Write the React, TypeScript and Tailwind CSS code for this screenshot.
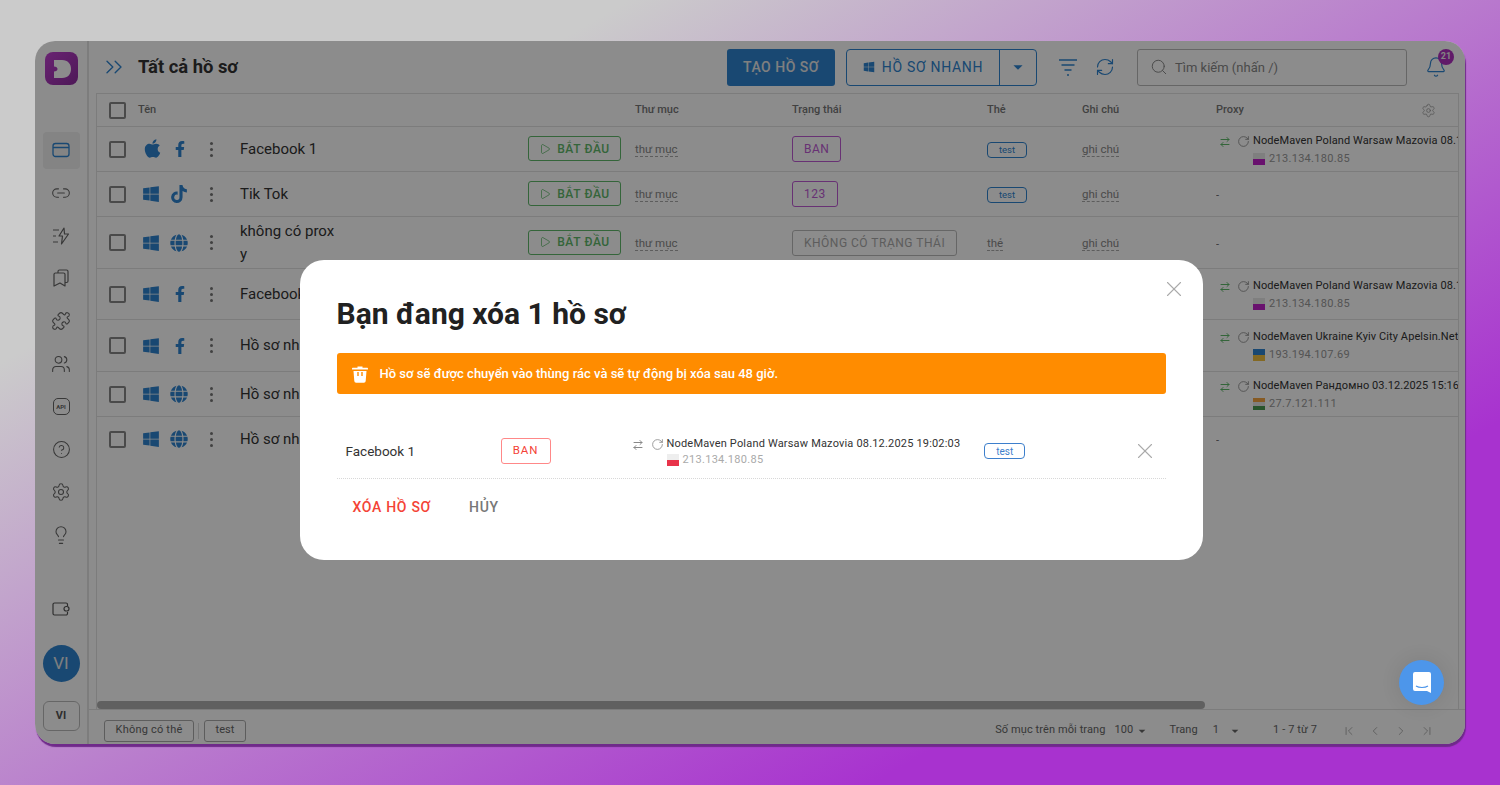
import { ReactNode } from 'react';
import {
  ArrowRightLeft, Bell, ChevronFirst, ChevronLast, ChevronLeft, ChevronRight, ChevronsRight,
  CircleHelp, Lightbulb, Link2, Play, Puzzle, RefreshCw, RotateCw, Search, Settings, Users, X,
} from 'lucide-react';
import { FaApple, FaFacebookF, FaGlobe, FaTiktok, FaWindows } from 'react-icons/fa';
import { MdArrowDropDown } from 'react-icons/md';

const WindowIcon = () => (
  <svg width="20" height="20" viewBox="0 0 20 20" fill="none" stroke="currentColor" strokeWidth="1.3">
    <rect x="2" y="3.5" width="16" height="13" rx="2.5" />
    <path d="M2 7.5h16" />
  </svg>
);

const BoltIcon = () => (
  <svg width="20" height="20" viewBox="0 0 20 20" fill="none" stroke="currentColor" strokeWidth="1.2" strokeLinejoin="round">
    <path d="M13 2l-5 8h3.500l-1 8 7-10h-4z" />
    <path d="M2 4h6M2 10h3M2 16h5" />
  </svg>
);

const CardsIcon = () => (
  <svg width="20" height="20" viewBox="0 0 20 20" fill="none" stroke="currentColor" strokeWidth="1.2" strokeLinejoin="round">
    <path d="M7 5V3.500A1.500 1.500 0 0 1 8.500 2h7A1.500 1.500 0 0 1 17 3.500V13a1.500 1.500 0 0 1-1.500 1.500H14" />
    <path d="M4.500 5h8A1.500 1.500 0 0 1 14 6.500V18l-5-3-6 3V6.500A1.500 1.500 0 0 1 4.500 5z" />
  </svg>
);

const WalletIcon = () => (
  <svg width="18" height="18" viewBox="0 0 18 18" fill="none" stroke="currentColor" strokeWidth="1.2">
    <path d="M15.500 6V4.500a1.500 1.500 0 0 0-1.500-1.500H2.500A1.500 1.500 0 0 0 1 4.500v9A1.500 1.500 0 0 0 2.500 15H14a1.500 1.500 0 0 0 1.500-1.500V12" />
    <rect x="12" y="6.500" width="5" height="4.500" rx="2.200" />
  </svg>
);

const FilterIcon = () => (
  <svg width="20" height="20" viewBox="0 0 20 20" fill="none" stroke="currentColor" strokeWidth="1.5">
    <path d="M1 3h18M3.500 8h13M6.500 13h7M9 18h2" />
  </svg>
);

const LogoIcon = () => (
  <svg width="22" height="22" viewBox="0 0 22 22" fill="#fff">
    <path d="M3 2h8c6 0 9 4 9 9s-3 9-9 9H3v-6.500c2.200 0 3.500-1 3.500-2.500S5.200 8.500 3 8.500z" />
  </svg>
);

const TrashIcon = () => (
  <svg width="16" height="18" viewBox="0 0 16 18">
    <path d="M5.500 1.500h5v1.300h4.500c.6 0 1 .4 1 1v.7H0v-.7c0-.6.4-1 1-1h4.500z" fill="#fff" />
    <path d="M1.500 6h13l-.8 10a1.800 1.800 0 0 1-1.800 1.700H4.100a1.800 1.800 0 0 1-1.800-1.700z" fill="#fff" />
    <path d="M6 7v4M10 7v4" stroke="#ff8c00" strokeWidth="1.400" />
  </svg>
);

const navIcons: ReactNode[] = [
  <WindowIcon />,
  <Link2 size={20} strokeWidth={1.3} />,
  <BoltIcon />,
  <CardsIcon />,
  <Puzzle size={20} strokeWidth={1.3} />,
  <Users size={20} strokeWidth={1.3} />,
  <div className="flex h-[17px] w-[17px] items-center justify-center rounded-[5px] border border-[#666] text-[6px] font-bold">API</div>,
  <CircleHelp size={19} strokeWidth={1.3} />,
  <Settings size={20} strokeWidth={1.3} />,
  <Lightbulb size={20} strokeWidth={1.3} />,
];

type Proxy = { name: string; ip: string; top: string; mid?: string; bottom: string };

type RowData = {
  os: 'apple' | 'win';
  browser: 'fb' | 'tiktok' | 'globe';
  name: string;
  status: string;
  statusClass: string;
  tag: boolean;
  proxy?: Proxy;
  h: string;
};

const poland = { top: 'bg-[#e8e8e8]', bottom: 'bg-[#c020c8]' };
const purple = 'border-[#bd5ad4] text-[#bd5ad4]';

const rows: RowData[] = [
  { os: 'apple', browser: 'fb', name: 'Facebook 1', status: 'BAN', statusClass: purple, tag: true, h: 'h-[45px]',
    proxy: { name: 'NodeMaven Poland Warsaw Mazovia 08.12.2025 19:02:03', ip: '213.134.180.85', ...poland } },
  { os: 'win', browser: 'tiktok', name: 'Tik Tok', status: '123', statusClass: purple, tag: true, h: 'h-[45px]' },
  { os: 'win', browser: 'globe', name: 'không có proxy', status: 'KHÔNG CÓ TRẠNG THÁI', statusClass: 'border-[#bbb] text-[#aaa]', tag: false, h: 'h-[52px]' },
  { os: 'win', browser: 'fb', name: 'Facebook 2', status: '', statusClass: '', tag: false, h: 'h-[51px]',
    proxy: { name: 'NodeMaven Poland Warsaw Mazovia 08.12.2025 19:02:03', ip: '213.134.180.85', ...poland } },
  { os: 'win', browser: 'fb', name: 'Hồ sơ nhanh', status: '', statusClass: '', tag: false, h: 'h-[52px]',
    proxy: { name: 'NodeMaven Ukraine Kyiv City Apelsin.Net', ip: '193.194.107.69', top: 'bg-[#2e84d0]', bottom: 'bg-[#f0c040]' } },
  { os: 'win', browser: 'globe', name: 'Hồ sơ nhanh', status: '', statusClass: '', tag: false, h: 'h-[45px]',
    proxy: { name: 'NodeMaven Рандомно 03.12.2025 15:16', ip: '27.7.121.111', top: 'bg-[#f5a540]', mid: 'bg-[#e8e8e8]', bottom: 'bg-[#4a9a50]' } },
  { os: 'win', browser: 'globe', name: 'Hồ sơ nhanh', status: '', statusClass: '', tag: false, h: 'h-[44px]' },
];

function Flag({ top, mid, bottom }: { top: string; mid?: string; bottom: string }) {
  return (
    <div className="flex h-[12px] w-[12px] shrink-0 flex-col">
      <div className={`flex-1 ${top}`} />
      {mid && <div className={`flex-1 ${mid}`} />}
      <div className={`flex-1 ${bottom}`} />
    </div>
  );
}

function ProfileRow({ row, last }: { row: RowData; last: boolean }) {
  return (
    <div className={`flex items-center pl-3 ${row.h} ${last ? '' : 'border-b border-[#e2e2e2]'}`}>
      <div className="w-[33px]">
        <div className="h-[17px] w-[17px] rounded-[2px] border-2 border-[#888]" />
      </div>
      <div className="w-[28px] text-[#2e84d0]">
        {row.os === 'apple' ? <FaApple size={21} className="-mt-[2px]" /> : <FaWindows size={18} />}
      </div>
      <div className="w-[30px] text-[#2e84d0]">
        {row.browser === 'fb' && <FaFacebookF size={16} className="ml-[2px]" />}
        {row.browser === 'tiktok' && <FaTiktok size={18} />}
        {row.browser === 'globe' && <FaGlobe size={18} />}
      </div>
      <div className="flex w-[22px] flex-col items-center gap-[3px]">
        <span className="h-[3px] w-[3px] rounded-full bg-[#777]" />
        <span className="h-[3px] w-[3px] rounded-full bg-[#777]" />
        <span className="h-[3px] w-[3px] rounded-full bg-[#777]" />
      </div>
      <div className="ml-[18px] w-[288px]">
        <div className="w-[100px] text-[15px] leading-[23px] break-all text-[#333]">{row.name}</div>
      </div>
      <div className="w-[107px]">
        <div className="mb-[1px] flex h-[25px] w-[93px] items-center justify-center gap-[6px] rounded-[3px] border border-[#5fb86a] text-[12px] font-medium tracking-[0.6px] text-[#5fb86a]">
          <Play size={12} strokeWidth={1.5} />
          BẮT ĐẦU
        </div>
      </div>
      <div className="-mt-[2px] w-[157px]">
        <span className="border-b border-dashed border-[#aaa] text-[11.5px] text-[#888]">thư mục</span>
      </div>
      <div className="w-[195px]">
        {row.status && (
          <span className={`inline-flex h-[26px] items-center rounded-[3px] border px-[11px] text-[12px] tracking-[0.5px] ${row.statusClass}`}>
            {row.status}
          </span>
        )}
      </div>
      <div className="-mt-[2px] w-[95px]">
        {row.tag ? (
          <span className="inline-flex h-[16px] w-[40px] items-center justify-center rounded-[4px] border border-[#2e84d0] text-[9.5px] text-[#2e84d0]">test</span>
        ) : row.status ? (
          <span className="border-b border-dashed border-[#aaa] text-[11.5px] text-[#888]">thẻ</span>
        ) : null}
      </div>
      <div className="-mt-[2px] w-[134px]">
        {row.status && <span className="border-b border-dashed border-[#aaa] text-[11.5px] text-[#888]">ghi chú</span>}
      </div>
      <div className="min-w-0 flex-1 overflow-hidden">
        {row.proxy ? (
          <div className="flex items-start whitespace-nowrap">
            <ArrowRightLeft size={12} className="mt-[3px] ml-[3px] shrink-0 text-[#5fb86a]" />
            <RotateCw size={13} strokeWidth={1.5} className="mt-[2px] ml-[6px] shrink-0 text-[#888]" />
            <div className="ml-[3px]">
              <div className="text-[11px] leading-[15px] tracking-[0.1px] text-[#333]">{row.proxy.name}</div>
              <div className="mt-[4px] flex items-center gap-[4px] text-[11px] leading-[14px] tracking-[0.3px] text-[#999]">
                <Flag top={row.proxy.top} mid={row.proxy.mid} bottom={row.proxy.bottom} />
                {row.proxy.ip}
              </div>
            </div>
          </div>
        ) : (
          <span className="text-[11px] text-[#666]">-</span>
        )}
      </div>
    </div>
  );
}

function Sidebar() {
  return (
    <aside className="flex w-[54px] shrink-0 flex-col items-center border-r-2 border-[#e4e4e4] pt-[11px] pb-[13px]">
      <div className="ml-[1px] flex h-[33px] w-[33px] items-center justify-center rounded-[8px] bg-[linear-gradient(135deg,#c040d0,#8e2ea0)]">
        <LogoIcon />
      </div>
      <div className="mt-[44px] flex flex-col items-center">
        {navIcons.map((icon, i) => (
          <div key={i} className="flex h-[42.7px] w-[37px] items-center justify-center">
            <div className={`flex h-[37px] w-[37px] items-center justify-center rounded-[4px] ${i === 0 ? 'bg-[#f0f0f0] text-[#2e84d0]' : 'text-[#666]'}`}>
              {icon}
            </div>
          </div>
        ))}
      </div>
      <div className="mt-auto text-[#555]">
        <WalletIcon />
      </div>
      <div className="mt-[27px] flex h-[37px] w-[37px] items-center justify-center rounded-full bg-[#2e84d0] text-[17px] text-[#e8e8e8]">VI</div>
      <div className="mt-[19px] flex h-[30px] w-[37px] items-center justify-center rounded-[6px] border border-[#bbb] text-[11px] font-bold text-[#555]">VI</div>
    </aside>
  );
}

function Header() {
  return (
    <div className="flex h-[52px] shrink-0 items-center pr-[18px] pl-[11px]">
      <ChevronsRight size={28} strokeWidth={1.15} className="text-[#2e84d0]" />
      <h1 className="mb-[1px] ml-[10px] text-[18.4px] font-bold text-[#333]">Tất cả hồ sơ</h1>
      <button className="ml-auto flex h-[37px] w-[108px] items-center justify-center rounded-[3px] bg-[#2e84d0] text-[14px] font-medium tracking-[0.5px] text-[#e8e8e8]">TẠO HỒ SƠ</button>
      <div className="ml-[11px] flex h-[37px] w-[191px] items-center rounded-[4px] border border-[#2e84d0] text-[#2e84d0]">
        <div className="flex h-full w-[153px] items-center justify-center gap-[7px] border-r border-[#2e84d0] text-[14px] tracking-[0.7px]">
          <FaWindows size={12} />
          HỒ SƠ NHANH
        </div>
        <MdArrowDropDown size={22} className="mx-auto" />
      </div>
      <div className="ml-[21px] text-[#2e84d0]"><FilterIcon /></div>
      <RefreshCw size={20} strokeWidth={1.4} className="ml-[17px] text-[#2e84d0]" />
      <div className="ml-[22px] flex h-[37px] w-[270px] items-center gap-[7px] rounded-[3px] border border-[#bbb] px-[12px] text-[#888]">
        <Search size={18} strokeWidth={1.3} />
        <span className="mt-[2px] text-[13px] text-[#888]">Tìm kiếm (nhấn /)</span>
      </div>
      <div className="relative ml-[18px] text-[#2e84d0]">
        <Bell size={22} strokeWidth={1.3} />
        <span className="absolute -top-[7px] -right-[7px] flex h-[16px] w-[16px] items-center justify-center rounded-full bg-[#b030c0] text-[9px] font-bold text-[#eee]">21</span>
      </div>
    </div>
  );
}

function Footer() {
  return (
    <div className="flex h-[35px] shrink-0 items-center border-t border-[#e2e2e2] pt-[7px] pr-[31px] pl-[15px] text-[11px] tracking-[0.1px] text-[#666]">
      <span className="flex h-[22px] w-[90px] items-center justify-center rounded-[3px] border border-[#aaa] tracking-[0.2px]">Không có thẻ</span>
      <span className="mx-[4px] h-[16px] w-px bg-[#ddd]" />
      <span className="ml-[1px] flex h-[22px] w-[42px] items-center justify-center rounded-[3px] border border-[#aaa]">test</span>
      <span className="ml-auto">Số mục trên mỗi trang</span>
      <span className="ml-[9px]">100</span>
      <MdArrowDropDown size={16} className="ml-[1px]" />
      <span className="ml-[19px]">Trang</span>
      <span className="ml-[15px]">1</span>
      <MdArrowDropDown size={16} className="ml-[8px]" />
      <span className="ml-[30px]">1 - 7 từ 7</span>
      <div className="ml-[25px] flex gap-[12px] text-[#999]">
        <ChevronFirst size={14} strokeWidth={1.3} />
        <ChevronLeft size={14} strokeWidth={1.3} />
        <ChevronRight size={14} strokeWidth={1.3} />
        <ChevronLast size={14} strokeWidth={1.3} />
      </div>
    </div>
  );
}

function DeleteModal() {
  return (
    <div className="ml-[2px] h-[300px] w-[903px] rounded-[24px] bg-white px-[37px] pt-[36px]">
      <div className="relative">
        <h2 className="text-[30px] leading-[36px] font-bold text-[#212121]">Bạn đang xóa 1 hồ sơ</h2>
        <X size={26} strokeWidth={1} className="absolute -top-[20px] right-[-21px] text-[#aaa]" />
      </div>
      <div className="mt-[21px] flex h-[41px] w-[829px] items-center rounded-[3px] bg-[#ff8c00] pl-[15px] text-[13px] font-medium text-white">
        <TrashIcon />
        <span className="ml-[12px]">Hồ sơ sẽ được chuyển vào thùng rác và sẽ tự động bị xóa sau 48 giờ.</span>
      </div>
      <div className="mt-[28px] flex h-[57px] w-[829px] items-center border-b border-dotted border-[#d8d8d8] pt-[2px] pl-[9px]">
        <span className="w-[155px] text-[13.5px] text-[#333]">Facebook 1</span>
        <span className="flex h-[26px] w-[50px] items-center justify-center rounded-[3px] border border-[#f88] text-[11.5px] tracking-[0.8px] text-[#f44336]">BAN</span>
        <ArrowRightLeft size={12} className="mb-[13px] ml-[81px] text-[#888]" />
        <RotateCw size={13} strokeWidth={1.5} className="mb-[13px] ml-[7px] text-[#888]" />
        <div className="mt-[1px] ml-[3px] whitespace-nowrap">
          <div className="text-[11px] leading-[15px] tracking-[0.18px] text-[#333]">NodeMaven Poland Warsaw Mazovia 08.12.2025 19:02:03</div>
          <div className="mt-[1px] flex items-center gap-[4px] text-[11px] leading-[15px] tracking-[0.3px] text-[#aaa]">
            <Flag top="bg-[#eee]" bottom="bg-[#e8334a]" />
            213.134.180.85
          </div>
        </div>
        <span className="ml-[24px] flex h-[16px] w-[41px] items-center justify-center rounded-[4px] border border-[#3d7fcc] text-[10px] text-[#3d7fcc]">test</span>
        <X size={26} strokeWidth={1} className="ml-[107px] text-[#aaa]" />
      </div>
      <div className="mt-[18px] flex items-center pl-[16px] text-[14px] font-medium tracking-[0.7px]">
        <button className="text-[#f44336]">XÓA HỒ SƠ</button>
        <button className="ml-[38px] text-[#777]">HỦY</button>
      </div>
    </div>
  );
}

export default function App() {
  return (
    <div className="h-[785px] w-[1500px] overflow-hidden bg-[linear-gradient(150deg,#cbcbcb_22%,#a832cf_78%)] pt-[41px] pl-[35px] font-['Roboto',sans-serif]">
      <div className="relative flex h-[703px] w-[1430px] overflow-hidden rounded-[20px] bg-white shadow-[1px_3px_1px_#6f2a8a]">
        <Sidebar />
        <main className="flex min-w-0 flex-1 flex-col">
          <Header />
          <div className="relative mr-[6px] ml-[7px] flex min-h-0 flex-1 flex-col border-x border-t border-[#e2e2e2]">
            <div className="flex h-[33px] shrink-0 items-center border-b border-[#e2e2e2] pl-3 text-[11px] font-medium text-[#777]">
              <div className="w-[29px]"><div className="h-[17px] w-[17px] rounded-[2px] border-2 border-[#888]" /></div>
              <span className="w-[497px]">Tên</span>
              <span className="w-[157px]">Thư mục</span>
              <span className="w-[195px]">Trạng thái</span>
              <span className="w-[95px]">Thẻ</span>
              <span className="w-[134px]">Ghi chú</span>
              <span>Proxy</span>
              <Settings size={15} strokeWidth={1.2} className="mr-[22px] ml-auto text-[#999]" />
            </div>
            {rows.map((row, i) => (
              <ProfileRow key={i} row={row} last={i === rows.length - 1} />
            ))}
            <div className="mt-auto h-[8px] w-[1108px] rounded-full bg-[#b0b0b0]" />
          </div>
          <Footer />
        </main>
        <div className="absolute inset-0 flex justify-center bg-black/45 pt-[219px]">
          <DeleteModal />
        </div>
        <div className="absolute top-[619px] right-[21px] flex h-[45px] w-[45px] items-center justify-center rounded-full bg-[#4d96ea] shadow-[0_0_20px_rgba(0,0,0,0.1)]">
          <svg width="20" height="23" viewBox="0 0 20 23">
            <path d="M3 1h14a2 2 0 0 1 2 2v19l-4-2H3a2 2 0 0 1-2-2V3a2 2 0 0 1 2-2z" fill="#fff" />
            <path d="M4 15c3 2 9 2 12 0" stroke="#4d96ea" strokeWidth="1.2" fill="none" />
          </svg>
        </div>
      </div>
    </div>
  );
}
